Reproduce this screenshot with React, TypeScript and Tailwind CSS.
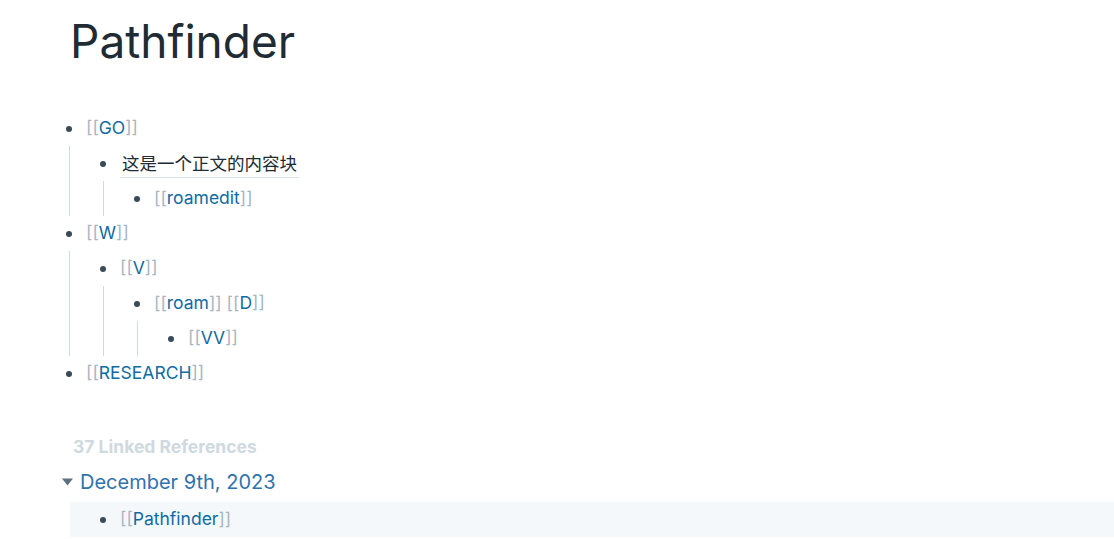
import React from 'react';

type Part = string | { link: string };
type Block = { parts: Part[]; children?: Block[]; editing?: boolean };

const blocks: Block[] = [
  {
    parts: [{ link: 'GO' }],
    children: [
      {
        parts: ['这是一个正文的内容块'],
        editing: true,
        children: [{ parts: [{ link: 'roamedit' }] }],
      },
    ],
  },
  {
    parts: [{ link: 'W' }],
    children: [
      {
        parts: [{ link: 'V' }],
        children: [
          {
            parts: [{ link: 'roam' }, ' ', { link: 'D' }],
            children: [{ parts: [{ link: 'VV' }] }],
          },
        ],
      },
    ],
  },
  { parts: [{ link: 'RESEARCH' }] },
];

const PageLink: React.FC<{ name: string }> = ({ name }) => (
  <span>
    <span className="text-[#a7b6c2]">[[</span>
    <span className="text-[#106ba3]">{name}</span>
    <span className="text-[#a7b6c2]">]]</span>
  </span>
);

const BlockRow: React.FC<{ block: Block }> = ({ block }) => (
  <div>
    <div className="flex items-center h-[35px]">
      <div className="w-[34px] flex justify-center shrink-0">
        <span className="w-[6px] h-[6px] rounded-full bg-[#394b59]" />
      </div>
      <div
        className={
          block.editing
            ? 'border-b border-[#d8e1e8] pl-[2px] pr-[2px] h-[28px] flex items-center pt-[2px]'
            : ''
        }
      >
        {block.parts.map((p, i) =>
          typeof p === 'string' ? (
            <span key={i} className="whitespace-pre">
              {p}
            </span>
          ) : (
            <PageLink key={i} name={p.link} />
          )
        )}
      </div>
    </div>
    {block.children && (
      <div className="ml-[17px] border-l border-[#ced9e0] pl-[16px]">
        {block.children.map((c, i) => (
          <BlockRow key={i} block={c} />
        ))}
      </div>
    )}
  </div>
);

export default function App() {
  return (
    <div
      className="min-h-[539px] bg-white text-[17.5px] text-[#202b33]"
      style={{ fontFamily: 'Inter, "Noto Sans CJK SC", sans-serif' }}
    >
      <div className="pl-[70px] pt-[12px] h-[111px]">
        <h1 className="text-[46px] leading-[58px] font-normal text-[#202b33]">Pathfinder</h1>
      </div>

      <div className="pl-[52px]">
        {blocks.map((b, i) => (
          <BlockRow key={i} block={b} />
        ))}
      </div>

      <div className="mt-[44px] pl-[73px] h-[24px] flex items-center font-bold text-[#ced9e0]">
        37 Linked References
      </div>

      <div className="mt-[7px] pl-[62px] flex items-center h-[32px]">
        <svg width="11" height="8" viewBox="0 0 11 8" className="mr-[7px]">
          <path d="M0 0.5 H11 L5.5 7.5 Z" fill="#5c7080" />
        </svg>
        <span className="text-[20px] text-[#2f73ad]">December 9th, 2023</span>
      </div>

      <div className="mt-[4px] ml-[70px] bg-[#f5f8fa] h-[35px] flex items-center pl-[16px]">
        <div className="w-[34px] flex justify-center shrink-0">
          <span className="w-[6px] h-[6px] rounded-full bg-[#394b59]" />
        </div>
        <PageLink name="Pathfinder" />
      </div>
    </div>
  );
}
